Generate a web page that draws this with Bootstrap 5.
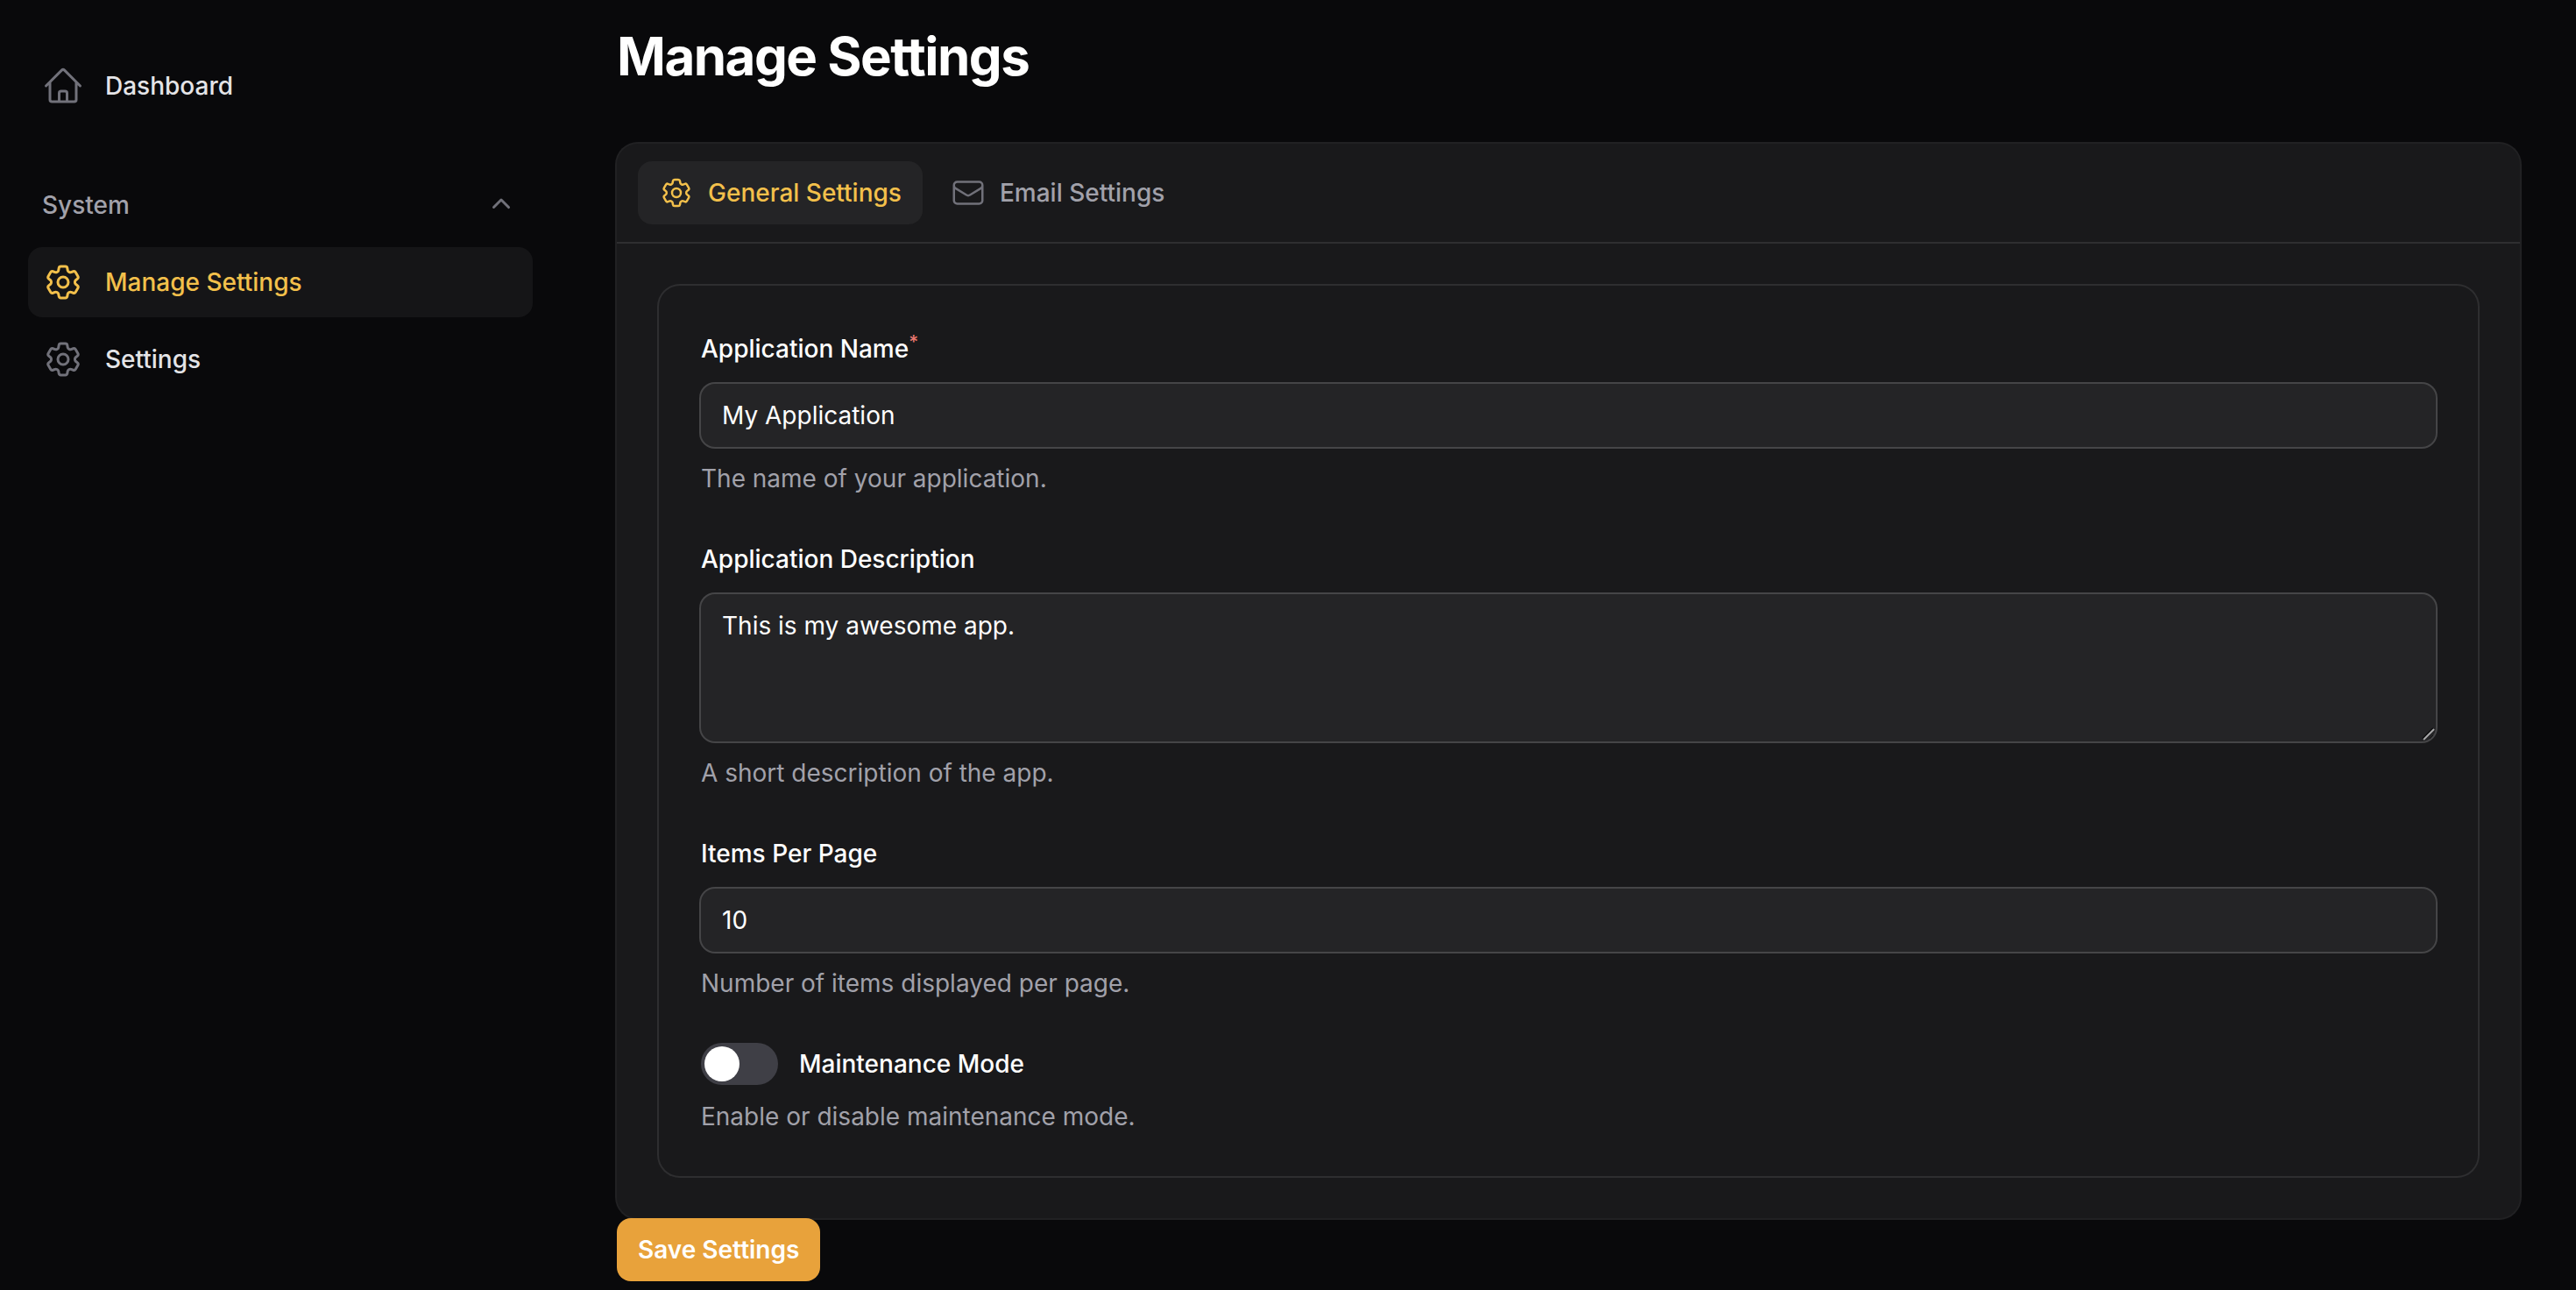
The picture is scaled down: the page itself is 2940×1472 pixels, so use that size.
<!DOCTYPE html>
<html lang="en" data-bs-theme="dark">
<head>
<meta charset="utf-8">
<meta name="viewport" content="width=device-width, initial-scale=1">
<title>Manage Settings</title>
<link href="https://cdn.jsdelivr.net/npm/bootstrap@5.3.0/dist/css/bootstrap.min.css" rel="stylesheet">
<style>
  :root {
    --page: #09090b;
    --panel: #19191b;
    --field: #242426;
    --line: #2e2e30;
    --accent: #f3c04b;
    --muted: #a1a1aa;
    --dim: #71717a;
  }
  body {
    background: var(--page);
    color: #fff;
    font-family: Inter, "Liberation Sans", sans-serif;
    font-size: 28px;
    line-height: 40px;
  }
  .side-nav { width: 640px; padding: 58px 32px 32px; gap: 56px; }
  .side-link {
    display: flex;
    align-items: center;
    gap: 24px;
    padding: 16px;
    border-radius: 16px;
    color: #e4e4e7;
    font-weight: 500;
    text-decoration: none;
  }
  .side-link svg { width: 48px; height: 48px; color: var(--dim); }
  .side-link.active { background: #151517; color: var(--accent); }
  .side-link.active svg, .tab-link.active svg { color: currentColor; }
  .group-toggle {
    padding: 16px;
    line-height: 48px;
    font-weight: 500;
    color: var(--muted);
    background: none;
    border: 0;
  }
  .group-toggle svg { width: 40px; height: 40px; color: var(--dim); }
  .group-list { gap: 8px; margin-top: 8px; }
  .content-area { padding: 28px 64px 0; min-width: 0; }
  .page-title { font-size: 60px; line-height: 72px; font-weight: 700; letter-spacing: -0.025em; margin-bottom: 64px; }
  .panel { background: var(--panel); border-radius: 24px; box-shadow: 0 0 0 2px #212123; }
  .tab-bar { padding: 20px 24px; gap: 8px; border-bottom: 2px solid var(--line); }
  .tab-link {
    display: flex;
    align-items: center;
    gap: 16px;
    padding: 16px 24px;
    border: 0;
    border-radius: 16px;
    background: none;
    color: var(--muted);
    font-weight: 500;
  }
  .tab-link svg { width: 40px; height: 40px; color: var(--dim); }
  .tab-link.active { background: var(--field); color: var(--accent); }
  .tab-body { padding: 48px; }
  .section-box { padding: 48px; gap: 48px; border-radius: 24px; box-shadow: 0 0 0 2px var(--line); }
  .field-group { display: flex; flex-direction: column; gap: 16px; }
  .field-label { line-height: 48px; font-weight: 500; }
  .field-label sup { color: #e9776f; line-height: 0; }
  .field-input, .field-input:focus {
    display: block;
    font-size: 28px;
    line-height: 48px;
    padding: 12px 24px;
    border: 0;
    border-radius: 16px;
    background: var(--field);
    color: #fff;
    box-shadow: 0 0 0 2px #454547;
  }
  textarea.field-input { height: 168px; line-height: 48px; }
  textarea.field-input::-webkit-resizer { display: none; }
  .grip { width: 16px; height: 16px; pointer-events: none; }
  .help-text { color: var(--muted); }
  .toggle-input {
    appearance: none;
    width: 88px;
    height: 48px;
    padding: 4px;
    margin: 0;
    border-radius: 24px;
    background: #3f3f46;
    cursor: pointer;
  }
  .toggle-input::before {
    content: "";
    display: block;
    width: 40px;
    height: 40px;
    border-radius: 50%;
    background: #fff;
  }
  .toggle-input:checked { background: #e8a23b; }
  .toggle-input:checked::before { margin-left: 40px; }
  .save-btn, .save-btn:hover {
    padding: 16px 24px;
    border: 0;
    border-radius: 16px;
    background: #e8a23b;
    color: #fff;
    font-size: 28px;
    line-height: 40px;
    font-weight: 600;
  }
  @media (max-width: 1399px) {
    .side-nav { width: 100%; }
  }
</style>
<script src="https://cdn.jsdelivr.net/npm/bootstrap@5.3.0/dist/js/bootstrap.bundle.min.js"></script>
</head>
<body>
<svg class="d-none" aria-hidden="true">
  <symbol id="icon-home" viewBox="0 0 24 24">
    <path fill="none" stroke="currentColor" stroke-width="1.5" stroke-linecap="round" stroke-linejoin="round" d="m2.25 12 8.954-8.955c.44-.439 1.152-.439 1.591 0L21.75 12M4.5 9.75v10.125c0 .621.504 1.125 1.125 1.125H9.75v-4.875c0-.621.504-1.125 1.125-1.125h2.25c.621 0 1.125.504 1.125 1.125V21h4.125c.621 0 1.125-.504 1.125-1.125V9.75M8.25 21h8.25"/>
  </symbol>
  <symbol id="icon-cog" viewBox="0 0 24 24">
    <g fill="none" stroke="currentColor" stroke-width="1.5" stroke-linecap="round" stroke-linejoin="round">
      <path d="M9.594 3.94c.09-.542.56-.94 1.11-.94h2.593c.55 0 1.02.398 1.11.94l.213 1.281c.063.374.313.686.645.87.074.04.147.083.22.127.325.196.72.257 1.075.124l1.217-.456a1.125 1.125 0 0 1 1.37.49l1.296 2.247a1.125 1.125 0 0 1-.26 1.431l-1.003.827c-.293.241-.438.613-.43.992a7.723 7.723 0 0 1 0 .255c-.008.378.137.75.43.991l1.004.827c.424.35.534.955.26 1.43l-1.298 2.247a1.125 1.125 0 0 1-1.369.491l-1.217-.456c-.355-.133-.75-.072-1.076.124a6.47 6.47 0 0 1-.22.128c-.331.183-.581.495-.644.869l-.213 1.281c-.09.543-.56.94-1.11.94h-2.594c-.55 0-1.019-.398-1.11-.94l-.213-1.281c-.062-.374-.312-.686-.644-.87a6.52 6.52 0 0 1-.22-.127c-.325-.196-.72-.257-1.076-.124l-1.217.456a1.125 1.125 0 0 1-1.369-.49l-1.297-2.247a1.125 1.125 0 0 1 .26-1.431l1.004-.827c.292-.24.437-.613.43-.991a6.932 6.932 0 0 1 0-.255c.007-.38-.138-.751-.43-.992l-1.004-.827a1.125 1.125 0 0 1-.26-1.43l1.297-2.247a1.125 1.125 0 0 1 1.37-.491l1.216.456c.356.133.751.072 1.076-.124.072-.044.146-.086.22-.128.332-.183.582-.495.644-.869l.214-1.28Z"/>
      <path d="M15 12a3 3 0 1 1-6 0 3 3 0 0 1 6 0Z"/>
    </g>
  </symbol>
  <symbol id="icon-mail" viewBox="0 0 24 24">
    <path fill="none" stroke="currentColor" stroke-width="1.5" stroke-linecap="round" stroke-linejoin="round" d="M21.75 6.75v10.5a2.25 2.25 0 0 1-2.25 2.25h-15a2.25 2.25 0 0 1-2.25-2.25V6.75m19.5 0A2.25 2.25 0 0 0 19.5 4.5h-15a2.25 2.25 0 0 0-2.25 2.25m19.5 0v.243a2.25 2.25 0 0 1-1.07 1.916l-7.5 4.615a2.25 2.25 0 0 1-2.36 0L3.32 8.91a2.25 2.25 0 0 1-1.07-1.916V6.75"/>
  </symbol>
  <symbol id="icon-up" viewBox="0 0 20 20">
    <path fill="currentColor" d="M9.47 6.47a.75.75 0 0 1 1.06 0l4.25 4.25a.75.75 0 1 1-1.06 1.06L10 8.06l-3.72 3.72a.75.75 0 0 1-1.06-1.06l4.25-4.25Z"/>
  </symbol>
</svg>

<div class="d-flex flex-column flex-xxl-row">
  <nav class="side-nav d-flex flex-column flex-shrink-0" aria-label="Main">
    <a class="side-link" href="#"><svg aria-hidden="true"><use href="#icon-home"/></svg>Dashboard</a>
    <div>
      <button class="group-toggle d-flex w-100 align-items-center justify-content-between" type="button" data-bs-toggle="collapse" data-bs-target="#systemGroup" aria-expanded="true">
        System
        <svg aria-hidden="true"><use href="#icon-up"/></svg>
      </button>
      <div class="collapse show" id="systemGroup">
        <div class="group-list d-flex flex-column">
          <a class="side-link active" href="#" aria-current="page"><svg aria-hidden="true"><use href="#icon-cog"/></svg>Manage Settings</a>
          <a class="side-link" href="#"><svg aria-hidden="true"><use href="#icon-cog"/></svg>Settings</a>
        </div>
      </div>
    </div>
  </nav>

  <main class="content-area flex-grow-1">
    <h1 class="page-title">Manage Settings</h1>
    <form>
      <div class="panel">
        <div class="tab-bar d-flex flex-wrap" role="tablist">
          <button class="tab-link active" type="button" role="tab" aria-selected="true"><svg aria-hidden="true"><use href="#icon-cog"/></svg>General Settings</button>
          <button class="tab-link" type="button" role="tab" aria-selected="false"><svg aria-hidden="true"><use href="#icon-mail"/></svg>Email Settings</button>
        </div>
        <div class="tab-body" role="tabpanel">
          <section class="section-box d-flex flex-column">
            <div class="field-group">
              <label class="field-label" for="appName">Application Name<sup>*</sup></label>
              <input class="field-input form-control" id="appName" type="text" value="My Application" required>
              <div class="help-text">The name of your application.</div>
            </div>
            <div class="field-group">
              <label class="field-label" for="appDescription">Application Description</label>
              <div class="position-relative">
                <textarea class="field-input form-control" id="appDescription">This is my awesome app.</textarea>
                <svg class="grip position-absolute bottom-0 end-0" viewBox="0 0 16 16" aria-hidden="true">
                  <path d="M1 13 13 1" stroke="#0c0c0d" stroke-width="2"/>
                  <path d="M2 14 14 2" stroke="#a9a9aa" stroke-width="2"/>
                  <path d="M9 13 13 9" stroke="#111112" stroke-width="1"/>
                </svg>
              </div>
              <div class="help-text">A short description of the app.</div>
            </div>
            <div class="field-group">
              <label class="field-label" for="perPage">Items Per Page</label>
              <input class="field-input form-control" id="perPage" type="text" inputmode="numeric" value="10">
              <div class="help-text">Number of items displayed per page.</div>
            </div>
            <div class="field-group">
              <div class="d-flex align-items-center gap-4">
                <input class="toggle-input" id="maintenance" type="checkbox" role="switch">
                <label class="field-label" for="maintenance">Maintenance Mode</label>
              </div>
              <div class="help-text">Enable or disable maintenance mode.</div>
            </div>
          </section>
        </div>
      </div>
      <button class="btn save-btn" type="submit">Save Settings</button>
    </form>
  </main>
</div>
</body>
</html>
